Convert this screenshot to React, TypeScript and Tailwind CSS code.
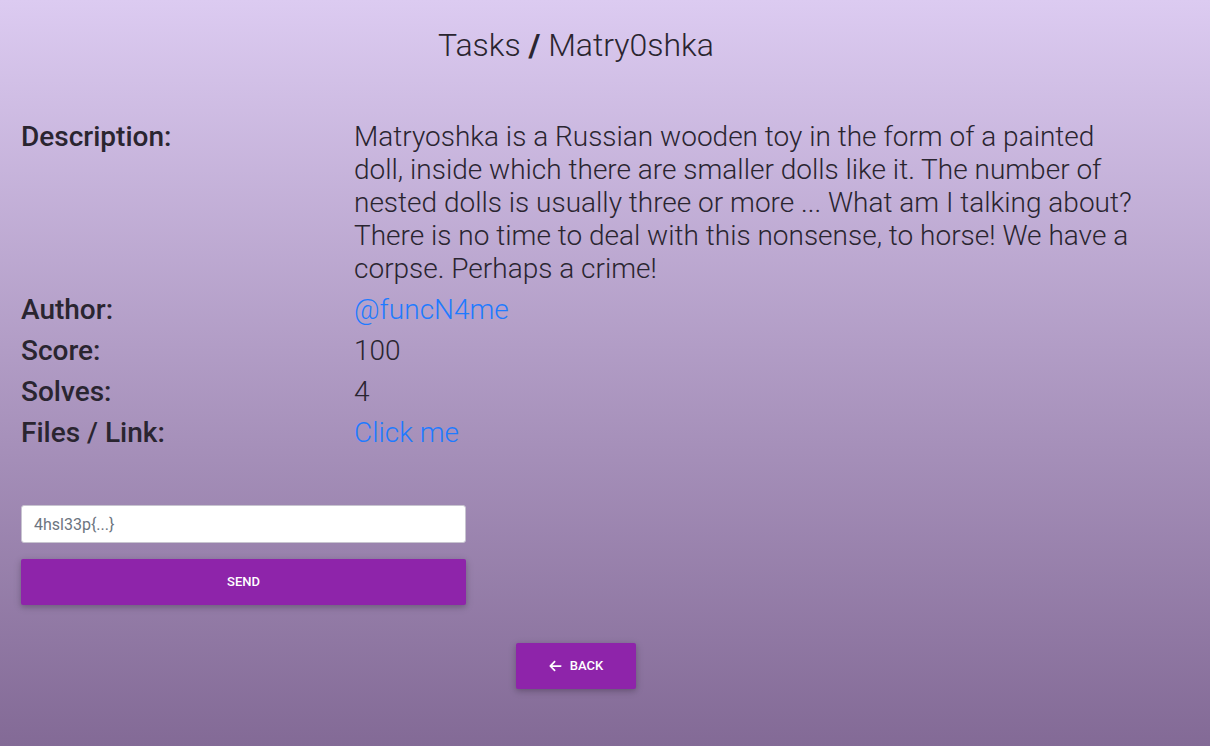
import React from "react";

export default function App() {
  const rows: { label: string; value: React.ReactNode }[] = [
    { label: "Author:", value: <span className="text-[#1f7bff]">@funcN4me</span> },
    { label: "Score:", value: "100" },
    { label: "Solves:", value: "4" },
    { label: "Files / Link:", value: <span className="text-[#1f7bff]">Click me</span> },
  ];
  return (
    <div
      className="w-[1210px] h-[746px] overflow-hidden bg-gradient-to-b from-[#dccbf1] to-[#836a96] text-[#2a2530]"
      style={{ fontFamily: "Roboto, 'Liberation Sans', sans-serif" }}
    >
      <div className="w-[1152px] pl-[21px] pr-[21px]">
        <h1 className="pt-[26px] text-center text-[32px] leading-[38px] font-light">
          Tasks <span className="font-bold">/</span> Matry0shka
        </h1>
        <div className="mt-[56px] grid grid-cols-[333px_790px] gap-y-[8px]">
          <div className="text-[28px] leading-[33px] font-medium">Description:</div>
          <div className="text-[28px] leading-[33px] font-light">
            Matryoshka is a Russian wooden toy in the form of a painted doll, inside which there are smaller dolls like it. The number of nested dolls is usually three or more ... What am I talking about? There is no time to deal with this nonsense, to horse! We have a corpse. Perhaps a crime!
          </div>
          {rows.map((r) => (
            <React.Fragment key={r.label}>
              <div className="text-[28px] leading-[33px] font-medium">{r.label}</div>
              <div className="text-[28px] leading-[33px] font-light">{r.value}</div>
            </React.Fragment>
          ))}
        </div>
        <div className="mt-[56px] w-[445px] flex flex-col gap-[16px]">
          <input
            className="h-[38px] w-full rounded-[3px] border border-[#c8c4d0] bg-white px-[12px] text-[16px] placeholder:text-[#6c7480] outline-none"
            placeholder="4hsl33p{...}"
          />
          <button className="h-[46px] w-full rounded-[2px] bg-[#8e24aa] text-white text-[13px] font-medium uppercase shadow-[0_2px_5px_rgba(0,0,0,0.16),0_2px_10px_rgba(0,0,0,0.12)]">
            SEND
          </button>
        </div>
        <div className="mt-[38px] flex justify-center">
          <button className="h-[46px] w-[120px] rounded-[2px] bg-[#8e24aa] text-white text-[13px] font-medium uppercase shadow-[0_2px_5px_rgba(0,0,0,0.16),0_2px_10px_rgba(0,0,0,0.12)] flex items-center justify-center gap-[8px]">
            <svg width="13" height="14" viewBox="0 0 448 512" fill="white">
              <path d="M9.4 233.4c-12.5 12.5-12.5 32.8 0 45.3l160 160c12.5 12.5 32.8 12.5 45.3 0s12.5-32.8 0-45.3L109.2 288 416 288c17.7 0 32-14.3 32-32s-14.3-32-32-32l-306.7 0L214.6 118.6c12.5-12.5 12.5-32.8 0-45.3s-32.8-12.5-45.3 0l-160 160z" />
            </svg>
            BACK
          </button>
        </div>
      </div>
    </div>
  );
}
